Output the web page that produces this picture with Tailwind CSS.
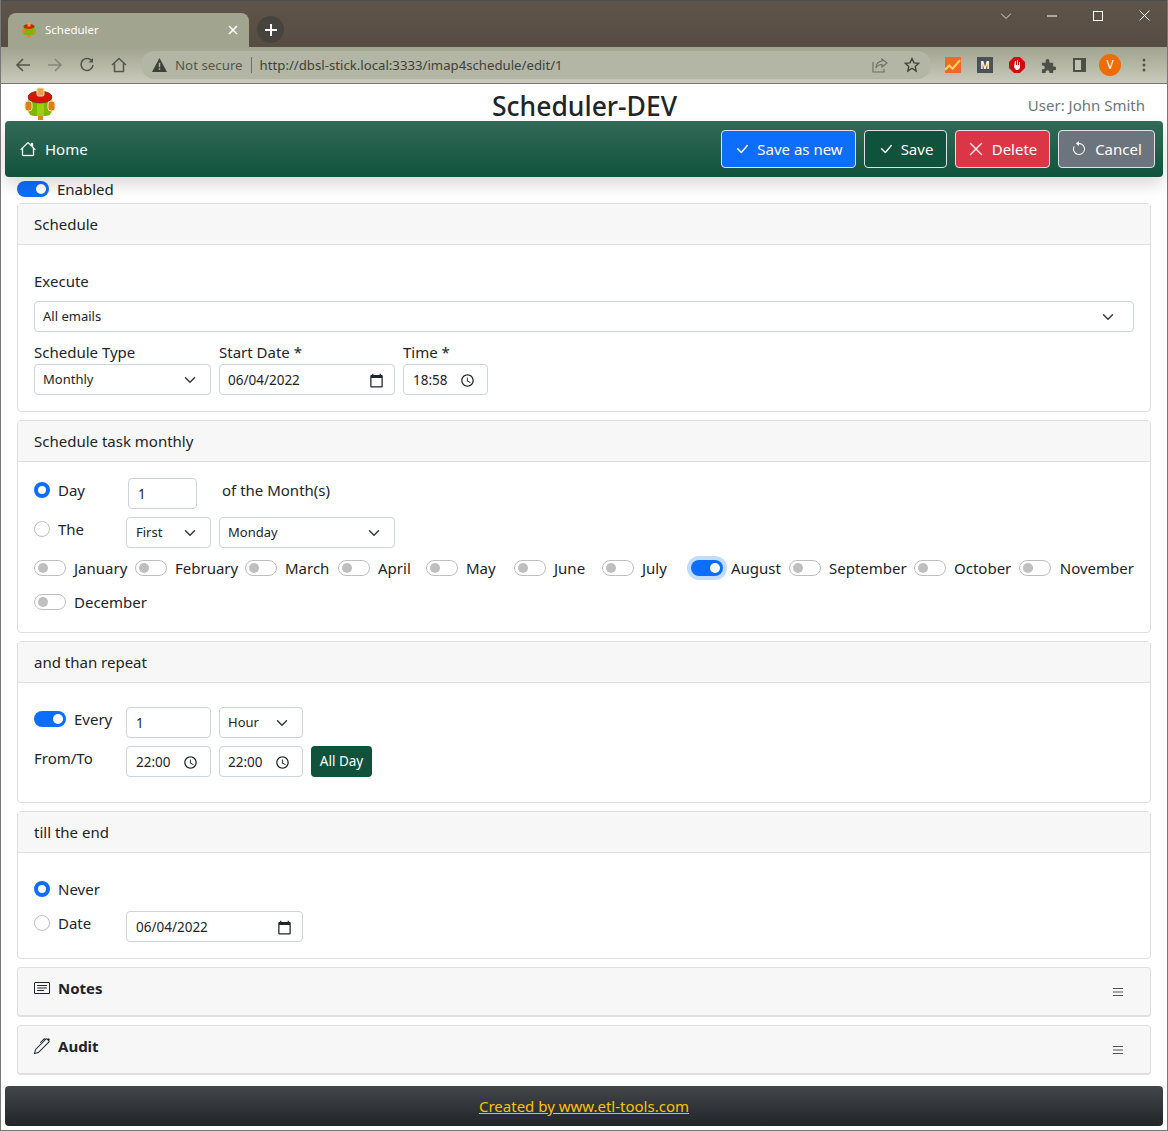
<!DOCTYPE html>
<html lang="en">
<head>
    <meta charset="UTF-8">
    <title>Scheduler</title>
    <script src="https://cdn.jsdelivr.net/npm/@tailwindcss/browser@4"></script>
</head>
<body class="bg-white">
<div class="w-[1168px] h-[1131px] overflow-hidden flex flex-col border-x border-b border-[#777] text-[#212529] text-[15px] font-['Noto_Sans','Open_Sans',sans-serif]">

    <!-- browser tab strip -->
    <div class="h-[47px] shrink-0 bg-gradient-to-b from-[#5f5449] to-[#574c43] border-t border-[#4a4a4a] flex items-end pl-[7px] relative">
        <div class="w-[241px] h-[34px] bg-[#a1a48f] rounded-t-[8px] flex items-center pl-[13px] pr-[11px] text-white text-[11.500px]">
            <svg class="w-4 h-4 mr-[8px]" viewBox="0 0 32 32"><rect x="5" y="10" width="22" height="16" rx="3" fill="#7ab800"/><ellipse cx="16" cy="9" rx="11" ry="5" fill="#d81e05"/><rect x="13" y="2" width="6" height="7" fill="#e8a33d"/><rect x="2" y="14" width="6" height="8" rx="2" fill="#e8841a"/><rect x="24" y="14" width="6" height="8" rx="2" fill="#e8841a"/><rect x="13" y="26" width="6" height="5" fill="#e8841a"/></svg>
            <span class="flex-1">Scheduler</span>
            <svg class="w-[10px] h-[10px]" viewBox="0 0 10 10" fill="none" stroke="white" stroke-width="1.500"><path d="M1 1l8 8M9 1l-8 8"/></svg>
        </div>
        <div class="w-[27px] h-[27px] rounded-full bg-[#47443f] ml-[8px] mb-[4px] flex items-center justify-center">
            <svg class="w-3 h-3" viewBox="0 0 12 12" fill="none" stroke="white" stroke-width="2"><path d="M6 0v12M0 6h12"/></svg>
        </div>
        <div class="absolute top-[9px] right-[17px] flex items-center gap-[36px]">
            <svg class="w-[10px] h-[10px]" viewBox="0 0 10 10" fill="none" stroke="#d8d4ce" stroke-width="1"><path d="M0 2.500l5 5 5-5"/></svg>
            <svg class="w-[10px] h-[10px]" viewBox="0 0 10 10" fill="none" stroke="white" stroke-width="1"><path d="M0 5h10"/></svg>
            <svg class="w-[10px] h-[10px]" viewBox="0 0 10 10" fill="none" stroke="white" stroke-width="1"><rect x=".5" y=".5" width="9" height="9"/></svg>
            <svg class="w-[11px] h-[11px]" viewBox="0 0 11 11" fill="none" stroke="white" stroke-width="1"><path d="M.5.5l10 10M10.500.5l-10 10"/></svg>
        </div>
    </div>

    <!-- browser toolbar -->
    <div class="h-[37px] shrink-0 bg-gradient-to-b from-[#a1a48f] to-[#c9cabb] border-b border-[#777] flex items-center pl-[14px] pr-[14px]">
        <svg class="w-4 h-4 mr-[16px]" viewBox="0 0 16 16" fill="none" stroke="#53564d" stroke-width="1.600"><path d="M15 8H2M8 2L2 8l6 6"/></svg>
        <svg class="w-4 h-4 mr-[16px]" viewBox="0 0 16 16" fill="none" stroke="#858877" stroke-width="1.600"><path d="M1 8h13M8 2l6 6-6 6"/></svg>
        <svg class="w-4 h-4 mr-[16px]" viewBox="0 0 16 16" fill="none" stroke="#53564d" stroke-width="1.600"><path d="M13.500 5A6 6 0 1 0 14 8"/><path d="M14 1v4.500H9.500" fill="#53564d" stroke="none"/></svg>
        <svg class="w-4 h-4 mr-[14px]" viewBox="0 0 16 16" fill="none" stroke="#53564d" stroke-width="1.500"><path d="M1 8l7-6.500L15 8M3.500 6.500V14.500h9V6.500"/></svg>
        <div class="w-[790px] h-[28px] rounded-full bg-[#b3b6a4] flex items-center pl-[11px] pr-[11px] text-[13.300px] text-[#53564d]">
            <svg class="w-[15px] h-[14px] mr-[8px]" viewBox="0 0 16 15"><path d="M8 0l8 15H0z" fill="#3e4139"/><path d="M7.200 5h1.600v5H7.200zM7.200 11h1.600v1.600H7.200z" fill="#b3b6a4"/></svg>
            <span class="pt-[1px]">Not secure</span>
            <span class="w-px h-[16px] bg-[#6b6e60] mx-[8px]"></span>
            <span class="flex-1 pt-[1px] text-[13.200px] text-[#3e4139]">http://dbsl-stick.local:3333/imap4schedule/edit/1</span>
            <svg class="w-[16px] h-[16px] mr-[16px]" viewBox="0 0 16 16" fill="none" stroke="#6b6e60" stroke-width="1.100"><path d="M10 2l5 4-5 4V7.500C7 7.500 5 9 4 11c0-4 2-6.500 6-7zM1 5v10h11v-3"/></svg>
            <svg class="w-[16px] h-[16px]" viewBox="0 0 16 16" fill="none" stroke="#3e4139" stroke-width="1.300"><path d="M8 1.500l2 4.300 4.700.5-3.500 3.200 1 4.600L8 11.300l-4.200 2.800 1-4.600L1.300 6.300 6 5.800z"/></svg>
        </div>
        <svg class="w-[16px] h-[16px] ml-[14px]" viewBox="0 0 15 15"><rect width="15" height="15" fill="#f4672a"/><path d="M0 12l4-4 3 3 7-8" fill="none" stroke="#ffd35a" stroke-width="2"/></svg>
        <div class="w-[16px] h-[16px] ml-[16px] bg-[#4a5157] text-white text-[10px] font-bold flex items-center justify-center leading-none">M</div>
        <svg class="w-[16px] h-[16px] ml-[16px]" viewBox="0 0 16 16"><path d="M5 0h6l5 5v6l-5 5H5l-5-5V5z" fill="#d40a0a"/><path d="M6 4h1v4h1V3h1v5h1V5h1v6l-2 2H7L5 10z" fill="white"/></svg>
        <svg class="w-[15px] h-[15px] ml-[16px]" viewBox="0 0 16 16"><path d="M1 5h4V3a2 2 0 0 1 4 0v2h4v4h1.500a2 2 0 0 1 0 4H13v3H9v-1a2 2 0 0 0-4 0v1H1v-4h1a2 2 0 0 0 0-4H1z" fill="#4d5048"/></svg>
        <svg class="w-[13px] h-[14px] ml-[17px]" viewBox="0 0 13 14"><path d="M0 0h13v14H0z" fill="#4d5048"/><rect x="2" y="2" width="6" height="10" fill="#c0c2b1"/></svg>
        <div class="w-[22px] h-[22px] rounded-full bg-[#ef6c00] text-white text-[12px] ml-[13px] flex items-center justify-center">V</div>
        <svg class="w-[4px] h-[14px] ml-[21px]" viewBox="0 0 4 14" fill="#53564d"><circle cx="2" cy="2" r="1.500"/><circle cx="2" cy="7" r="1.500"/><circle cx="2" cy="12" r="1.500"/></svg>
    </div>

    <!-- page heading -->
    <div class="h-[37px] shrink-0 flex items-center pl-[23px] pr-[22px]">
        <div class="flex-1">
            <svg class="w-[32px] h-[33px] mt-[1px]" viewBox="0 0 32 33">
                <rect x="14" y="27" width="5" height="6" fill="#e28a18"/>
                <rect x="4" y="8" width="24" height="21" rx="6" fill="#7fb800"/>
                <rect x="13" y="9" width="7" height="20" fill="#9ccf10"/>
                <ellipse cx="16" cy="10" rx="12" ry="6" fill="#d81400" stroke="#333" stroke-width=".6"/>
                <rect x="13" y="1" width="7" height="8" rx="1.500" fill="#e6a04a" stroke="#f3e3b5"/>
                <rect x="1" y="14" width="7" height="10" rx="3" fill="#df7f16" stroke="#f3e3b5"/>
                <rect x="24" y="14" width="7" height="10" rx="3" fill="#df7f16" stroke="#f3e3b5"/>
            </svg>
        </div>
        <div class="text-[26.500px] font-medium leading-none pt-[7px]">Scheduler-DEV</div>
        <div class="flex-1 text-right text-[#6c757d] pt-[6px]">User: John Smith</div>
    </div>

    <!-- nav bar -->
    <div class="relative h-[56px] shrink-0 mx-[4px] rounded-[4px] bg-gradient-to-b from-[#316b58] to-[#10523c] shadow-[0_8px_16px_rgba(0,0,0,0.15)] flex items-center pl-[15px] pr-[8px] text-white">
        <svg class="w-[16px] h-[16px] mr-[9px]" viewBox="0 0 16 16" fill="white" stroke="white" stroke-width=".3"><path fill-rule="evenodd" d="M2 13.500V7h1v6.500a.5.5 0 0 0 .5.5h9a.5.5 0 0 0 .5-.5V7h1v6.500a1.500 1.500 0 0 1-1.500 1.500h-9A1.500 1.500 0 0 1 2 13.500zm11-11V6l-2-2V2.500a.5.5 0 0 1 .5-.5h1a.5.5 0 0 1 .5.5z"/><path fill-rule="evenodd" d="M7.293 1.500a1 1 0 0 1 1.414 0l6.647 6.646a.5.5 0 0 1-.708.708L8 2.207 1.354 8.854a.5.5 0 1 1-.708-.708L7.293 1.500z"/></svg>
        <span class="flex-1">Home</span>
        <div class="flex gap-[8px]">
            <button class="w-[135px] h-[38px] bg-[#0d6efd] border border-[#dee2e6] rounded-[4px] flex items-center justify-center gap-[7px]">
                <svg class="w-[16px] h-[16px]" viewBox="0 0 16 16" fill="white"><path d="M12.736 3.970a.733.733 0 0 1 1.047 0c.286.289.29.756.01 1.050L7.880 12.010a.733.733 0 0 1-1.065.02L3.217 8.384a.757.757 0 0 1 0-1.060.733.733 0 0 1 1.047 0l3.052 3.093 5.400-6.425a.247.247 0 0 1 .02-.022Z"/></svg>
                Save as new
            </button>
            <button class="w-[83px] h-[38px] bg-[#10523c] border border-[#dee2e6] rounded-[4px] flex items-center justify-center gap-[7px]">
                <svg class="w-[16px] h-[16px]" viewBox="0 0 16 16" fill="white"><path d="M12.736 3.970a.733.733 0 0 1 1.047 0c.286.289.29.756.01 1.050L7.880 12.010a.733.733 0 0 1-1.065.02L3.217 8.384a.757.757 0 0 1 0-1.060.733.733 0 0 1 1.047 0l3.052 3.093 5.400-6.425a.247.247 0 0 1 .02-.022Z"/></svg>
                Save
            </button>
            <button class="w-[95px] h-[38px] bg-[#dc3545] border border-[#dee2e6] rounded-[4px] flex items-center justify-center gap-[8px]">
                <svg class="w-[16px] h-[16px]" viewBox="0 0 16 16" fill="white" stroke="white" stroke-width=".4"><path d="M2.146 2.854a.5.5 0 1 1 .708-.708L8 7.293l5.146-5.147a.5.5 0 0 1 .708.708L8.707 8l5.147 5.146a.5.5 0 0 1-.708.708L8 8.707l-5.146 5.147a.5.5 0 0 1-.708-.708L7.293 8 2.146 2.854Z"/></svg>
                Delete
            </button>
            <button class="w-[97px] h-[38px] bg-[#6c757d] border border-[#dee2e6] rounded-[4px] flex items-center justify-center gap-[8px]">
                <svg class="w-[16px] h-[16px]" viewBox="0 0 16 16" fill="white"><path fill-rule="evenodd" d="M8 3a5 5 0 1 1-4.546 2.914.5.5 0 0 0-.908-.417A6 6 0 1 0 8 2v1z"/><path d="M8 4.466V.534a.25.25 0 0 0-.41-.192L5.230 2.308a.25.25 0 0 0 0 .384l2.360 1.966A.25.25 0 0 0 8 4.466z"/></svg>
                Cancel
            </button>
        </div>
    </div>

    <div class="px-[16px] pt-[3px] flex flex-col gap-[8px] flex-1">
        <!-- enabled -->
        <div class="h-[18px] flex items-center gap-[8px] -mb-[3px]">
            <div class="w-[32px] h-[16px] rounded-full bg-[#0d6efd] flex items-center justify-end pr-[3px]"><div class="w-[10px] h-[10px] rounded-full bg-white"></div></div>
            <span>Enabled</span>
        </div>

        <!-- schedule -->
        <section class="h-[209px] border border-[#dfdfdf] rounded-[4px]">
            <div class="h-[41px] bg-[#f7f7f7] border-b border-[#dfdfdf] flex items-center px-[16px]">Schedule</div>
            <div class="px-[16px] pt-[24px]">
                <div class="h-[24px] leading-[24px]">Execute</div>
                <div class="mt-[8px] w-[1100px] h-[31px] border border-[#ced4da] rounded-[4px] flex items-center justify-between pl-[8px] pt-[1px] pr-[19px] text-[13px]">
                    All emails
                    <svg class="w-[12px] h-[12px]" viewBox="0 0 16 16" fill="none" stroke="#343a40" stroke-width="2" stroke-linecap="round" stroke-linejoin="round"><path d="M2 5l6 6 6-6"/></svg>
                </div>
                <div class="mt-[8px] flex gap-[8px]">
                    <div class="w-[177px]">
                        <div class="h-[24px] leading-[24px]">Schedule Type</div>
                        <div class="h-[31px] border border-[#ced4da] rounded-[4px] flex items-center justify-between pl-[8px] pt-[1px] pr-[14px] text-[13px]">
                            Monthly
                            <svg class="w-[12px] h-[12px]" viewBox="0 0 16 16" fill="none" stroke="#343a40" stroke-width="2" stroke-linecap="round" stroke-linejoin="round"><path d="M2 5l6 6 6-6"/></svg>
                        </div>
                    </div>
                    <div class="w-[176px]">
                        <div class="h-[24px] leading-[24px]">Start Date *</div>
                        <div class="h-[31px] border border-[#ced4da] rounded-[4px] flex items-center justify-between pl-[8px] pt-[1px] pr-[10px] text-[13.500px]">
                            06/04/2022
                            <svg class="w-[15px] h-[15px]" viewBox="0 0 24 24" fill="#212529"><path d="M20 3h-1V1h-2v2H7V1H5v2H4c-1.100 0-2 .9-2 2v16c0 1.100.9 2 2 2h16c1.100 0 2-.9 2-2V5c0-1.100-.9-2-2-2zm0 18H4V8h16v13z"/></svg>
                        </div>
                    </div>
                    <div class="w-[85px]">
                        <div class="h-[24px] leading-[24px]">Time *</div>
                        <div class="h-[31px] border border-[#ced4da] rounded-[4px] flex items-center justify-between pl-[9px] pt-[1px] pr-[12px] text-[13.500px]">
                            18:58
                            <svg class="w-[15px] h-[15px]" viewBox="0 0 24 24" fill="#212529"><path d="M11.990 2C6.470 2 2 6.480 2 12s4.470 10 9.990 10C17.520 22 22 17.520 22 12S17.520 2 11.990 2zM12 20c-4.420 0-8-3.580-8-8s3.580-8 8-8 8 3.580 8 8-3.580 8-8 8zm.5-13H11v6l5.250 3.150.75-1.230-4.500-2.670z"/></svg>
                        </div>
                    </div>
                </div>
            </div>
        </section>

        <!-- monthly -->
        <section class="h-[213px] border border-[#dfdfdf] rounded-[4px]">
            <div class="h-[41px] bg-[#f7f7f7] border-b border-[#dfdfdf] flex items-center px-[16px]">Schedule task monthly</div>
            <div class="px-[16px] pt-[16px]">
                <div class="h-[31px] flex">
                    <div class="w-[94px] h-[24px] flex items-center gap-[8px]">
                        <div class="w-[16px] h-[16px] rounded-full border-[4.500px] border-[#0d6efd]"></div>Day
                    </div>
                    <div class="w-[69px] h-[31px] border border-[#ced4da] rounded-[4px] flex items-center pl-[9px] pt-[1px] text-[13.500px]">1</div>
                    <div class="ml-[25px] h-[24px] leading-[24px]">of the Month(s)</div>
                </div>
                <div class="mt-[8px] h-[31px] flex">
                    <div class="w-[92px] h-[24px] flex items-center gap-[8px]">
                        <div class="w-[16px] h-[16px] rounded-full border border-[#bfbfbf]"></div>The
                    </div>
                    <div class="w-[85px] h-[31px] border border-[#ced4da] rounded-[4px] flex items-center justify-between pl-[9px] pt-[1px] pr-[14px] text-[13px]">
                        First
                        <svg class="w-[12px] h-[12px]" viewBox="0 0 16 16" fill="none" stroke="#343a40" stroke-width="2" stroke-linecap="round" stroke-linejoin="round"><path d="M2 5l6 6 6-6"/></svg>
                    </div>
                    <div class="ml-[8px] w-[176px] h-[31px] border border-[#ced4da] rounded-[4px] flex items-center justify-between pl-[8px] pt-[1px] pr-[14px] text-[13px]">
                        Monday
                        <svg class="w-[12px] h-[12px]" viewBox="0 0 16 16" fill="none" stroke="#343a40" stroke-width="2" stroke-linecap="round" stroke-linejoin="round"><path d="M2 5l6 6 6-6"/></svg>
                    </div>
                </div>
                <div class="mt-[8px] flex flex-wrap">
                    <div class="w-[101px] h-[24px] mb-[10px] flex items-center gap-[8px]"><div class="w-[32px] h-[16px] rounded-full border border-[#bfbfbf] pl-[3px] flex items-center"><div class="w-[10px] h-[10px] rounded-full bg-[#bfbfbf]"></div></div>January</div>
                    <div class="w-[110px] h-[24px] mb-[10px] flex items-center gap-[8px]"><div class="w-[32px] h-[16px] rounded-full border border-[#bfbfbf] pl-[3px] flex items-center"><div class="w-[10px] h-[10px] rounded-full bg-[#bfbfbf]"></div></div>February</div>
                    <div class="w-[93px] h-[24px] mb-[10px] flex items-center gap-[8px]"><div class="w-[32px] h-[16px] rounded-full border border-[#bfbfbf] pl-[3px] flex items-center"><div class="w-[10px] h-[10px] rounded-full bg-[#bfbfbf]"></div></div>March</div>
                    <div class="w-[88px] h-[24px] mb-[10px] flex items-center gap-[8px]"><div class="w-[32px] h-[16px] rounded-full border border-[#bfbfbf] pl-[3px] flex items-center"><div class="w-[10px] h-[10px] rounded-full bg-[#bfbfbf]"></div></div>April</div>
                    <div class="w-[88px] h-[24px] mb-[10px] flex items-center gap-[8px]"><div class="w-[32px] h-[16px] rounded-full border border-[#bfbfbf] pl-[3px] flex items-center"><div class="w-[10px] h-[10px] rounded-full bg-[#bfbfbf]"></div></div>May</div>
                    <div class="w-[88px] h-[24px] mb-[10px] flex items-center gap-[8px]"><div class="w-[32px] h-[16px] rounded-full border border-[#bfbfbf] pl-[3px] flex items-center"><div class="w-[10px] h-[10px] rounded-full bg-[#bfbfbf]"></div></div>June</div>
                    <div class="w-[89px] h-[24px] mb-[10px] flex items-center gap-[8px]"><div class="w-[32px] h-[16px] rounded-full border border-[#bfbfbf] pl-[3px] flex items-center"><div class="w-[10px] h-[10px] rounded-full bg-[#bfbfbf]"></div></div>July</div>
                    <div class="w-[98px] h-[24px] mb-[10px] flex items-center gap-[8px]"><div class="w-[32px] h-[16px] rounded-full bg-[#0d6efd] shadow-[0_0_0_4px_#c2dbfe] pr-[3px] flex items-center justify-end"><div class="w-[10px] h-[10px] rounded-full bg-white"></div></div>August</div>
                    <div class="w-[125px] h-[24px] mb-[10px] flex items-center gap-[8px]"><div class="w-[32px] h-[16px] rounded-full border border-[#bfbfbf] pl-[3px] flex items-center"><div class="w-[10px] h-[10px] rounded-full bg-[#bfbfbf]"></div></div>September</div>
                    <div class="w-[105px] h-[24px] mb-[10px] flex items-center gap-[8px]"><div class="w-[32px] h-[16px] rounded-full border border-[#bfbfbf] pl-[3px] flex items-center"><div class="w-[10px] h-[10px] rounded-full bg-[#bfbfbf]"></div></div>October</div>
                    <div class="w-[115px] h-[24px] mb-[10px] flex items-center gap-[9px]"><div class="w-[32px] h-[16px] rounded-full border border-[#bfbfbf] pl-[3px] flex items-center"><div class="w-[10px] h-[10px] rounded-full bg-[#bfbfbf]"></div></div>November</div>
                    <div class="w-[125px] h-[24px] flex items-center gap-[8px]"><div class="w-[32px] h-[16px] rounded-full border border-[#bfbfbf] pl-[3px] flex items-center"><div class="w-[10px] h-[10px] rounded-full bg-[#bfbfbf]"></div></div>December</div>
                </div>
            </div>
        </section>

        <!-- repeat -->
        <section class="h-[162px] border border-[#dfdfdf] rounded-[4px]">
            <div class="h-[41px] bg-[#f7f7f7] border-b border-[#dfdfdf] flex items-center px-[16px]">and than repeat</div>
            <div class="px-[16px] pt-[24px]">
                <div class="h-[31px] flex">
                    <div class="w-[92px] h-[24px] flex items-center gap-[8px]">
                        <div class="w-[32px] h-[16px] rounded-full bg-[#0d6efd] pr-[3px] flex items-center justify-end"><div class="w-[10px] h-[10px] rounded-full bg-white"></div></div>Every
                    </div>
                    <div class="w-[85px] h-[31px] border border-[#ced4da] rounded-[4px] flex items-center pl-[9px] pt-[1px] text-[13.500px]">1</div>
                    <div class="ml-[8px] w-[84px] h-[31px] border border-[#ced4da] rounded-[4px] flex items-center justify-between pl-[8px] pt-[1px] pr-[14px] text-[13px]">
                        Hour
                        <svg class="w-[12px] h-[12px]" viewBox="0 0 16 16" fill="none" stroke="#343a40" stroke-width="2" stroke-linecap="round" stroke-linejoin="round"><path d="M2 5l6 6 6-6"/></svg>
                    </div>
                </div>
                <div class="mt-[8px] h-[31px] flex">
                    <div class="w-[92px] h-[24px] leading-[24px]">From/To</div>
                    <div class="w-[85px] h-[31px] border border-[#ced4da] rounded-[4px] flex items-center justify-between pl-[9px] pt-[1px] pr-[12px] text-[13.500px]">
                        22:00
                        <svg class="w-[15px] h-[15px]" viewBox="0 0 24 24" fill="#212529"><path d="M11.990 2C6.470 2 2 6.480 2 12s4.470 10 9.990 10C17.520 22 22 17.520 22 12S17.520 2 11.990 2zM12 20c-4.420 0-8-3.580-8-8s3.580-8 8-8 8 3.580 8 8-3.580 8-8 8zm.5-13H11v6l5.250 3.150.75-1.230-4.500-2.670z"/></svg>
                    </div>
                    <div class="ml-[8px] w-[84px] h-[31px] border border-[#ced4da] rounded-[4px] flex items-center justify-between pl-[8px] pt-[1px] pr-[12px] text-[13.500px]">
                        22:00
                        <svg class="w-[15px] h-[15px]" viewBox="0 0 24 24" fill="#212529"><path d="M11.990 2C6.470 2 2 6.480 2 12s4.470 10 9.990 10C17.520 22 22 17.520 22 12S17.520 2 11.990 2zM12 20c-4.420 0-8-3.580-8-8s3.580-8 8-8 8 3.580 8 8-3.580 8-8 8zm.5-13H11v6l5.250 3.150.75-1.230-4.500-2.670z"/></svg>
                    </div>
                    <button class="ml-[8px] w-[61px] h-[31px] bg-[#10523c] text-white rounded-[4px] text-[13.500px]">All Day</button>
                </div>
            </div>
        </section>

        <!-- end -->
        <section class="h-[148px] border border-[#dfdfdf] rounded-[4px]">
            <div class="h-[41px] bg-[#f7f7f7] border-b border-[#dfdfdf] flex items-center px-[16px]">till the end</div>
            <div class="px-[16px] pt-[24px]">
                <div class="h-[24px] flex items-center gap-[8px]">
                    <div class="w-[16px] h-[16px] rounded-full border-[4.500px] border-[#0d6efd]"></div>Never
                </div>
                <div class="mt-[10px] h-[31px] flex">
                    <div class="w-[92px] h-[24px] flex items-center gap-[8px]">
                        <div class="w-[16px] h-[16px] rounded-full border border-[#bfbfbf]"></div>Date
                    </div>
                    <div class="w-[177px] h-[31px] border border-[#ced4da] rounded-[4px] flex items-center justify-between pl-[9px] pt-[1px] pr-[10px] text-[13.500px]">
                        06/04/2022
                        <svg class="w-[15px] h-[15px]" viewBox="0 0 24 24" fill="#212529"><path d="M20 3h-1V1h-2v2H7V1H5v2H4c-1.100 0-2 .9-2 2v16c0 1.100.9 2 2 2h16c1.100 0 2-.9 2-2V5c0-1.100-.9-2-2-2zm0 18H4V8h16v13z"/></svg>
                    </div>
                </div>
            </div>
        </section>

        <!-- notes -->
        <section class="h-[50px] bg-[#f7f7f7] border border-[#dfdfdf] border-b-2 rounded-[4px] flex justify-between pl-[16px] pr-[26px] pt-[8px]">
            <div class="h-[24px] flex items-center gap-[8px] font-bold">
                <svg class="w-[16px] h-[16px]" viewBox="0 0 16 16" fill="#212529"><path d="M14.500 3a.5.5 0 0 1 .5.5v9a.5.5 0 0 1-.5.5h-13a.5.5 0 0 1-.5-.5v-9a.5.5 0 0 1 .5-.5h13zm-13-1A1.500 1.500 0 0 0 0 3.500v9A1.500 1.500 0 0 0 1.500 14h13a1.500 1.500 0 0 0 1.500-1.500v-9A1.500 1.500 0 0 0 14.500 2h-13z"/><path d="M3 5.500a.5.5 0 0 1 .5-.5h9a.5.5 0 0 1 0 1h-9a.5.5 0 0 1-.5-.5zM3 8a.5.5 0 0 1 .5-.5h9a.5.5 0 0 1 0 1h-9A.5.5 0 0 1 3 8zm0 2.500a.5.5 0 0 1 .5-.5h6a.5.5 0 0 1 0 1h-6a.5.5 0 0 1-.5-.5z"/></svg>
                Notes
            </div>
            <svg class="w-[12px] h-[12px] mt-[10px]" viewBox="0 0 12 12" stroke="#555" stroke-width="1"><path d="M1 2.500h10M1 6h10M1 9.500h10"/></svg>
        </section>

        <!-- audit -->
        <section class="h-[50px] bg-[#f7f7f7] border border-[#dfdfdf] border-b-2 rounded-[4px] flex justify-between pl-[16px] pr-[26px] pt-[8px]">
            <div class="h-[24px] flex items-center gap-[8px] font-bold">
                <svg class="w-[16px] h-[16px]" viewBox="0 0 16 16" fill="#212529"><path d="m13.498.795.149-.149a1.207 1.207 0 1 1 1.707 1.708l-.149.148a1.500 1.500 0 0 1-.059 2.059L4.854 14.854a.5.5 0 0 1-.233.131l-4 1a.5.5 0 0 1-.606-.606l1-4a.5.5 0 0 1 .131-.232l9.642-9.642a.5.5 0 0 0-.642.056L6.854 4.854a.5.5 0 1 1-.708-.708L9.440.854A1.500 1.500 0 0 1 11.500.796a1.500 1.500 0 0 1 1.998-.001zm-.644.766a.5.5 0 0 0-.707 0L1.950 11.756l-.764 3.057 3.057-.764L14.440 3.854a.5.5 0 0 0 0-.708l-1.585-1.585z"/></svg>
                Audit
            </div>
            <svg class="w-[12px] h-[12px] mt-[10px]" viewBox="0 0 12 12" stroke="#555" stroke-width="1"><path d="M1 2.500h10M1 6h10M1 9.500h10"/></svg>
        </section>
    </div>

    <!-- footer -->
    <div class="h-[40px] shrink-0 mx-[4px] mb-[4px] rounded-[4px] bg-gradient-to-b from-[#43474a] to-[#212529] flex items-center justify-center">
        <a class="text-[#ffc107] underline" href="#">Created by www.etl-tools.com</a>
    </div>
</div>
</body>
</html>
